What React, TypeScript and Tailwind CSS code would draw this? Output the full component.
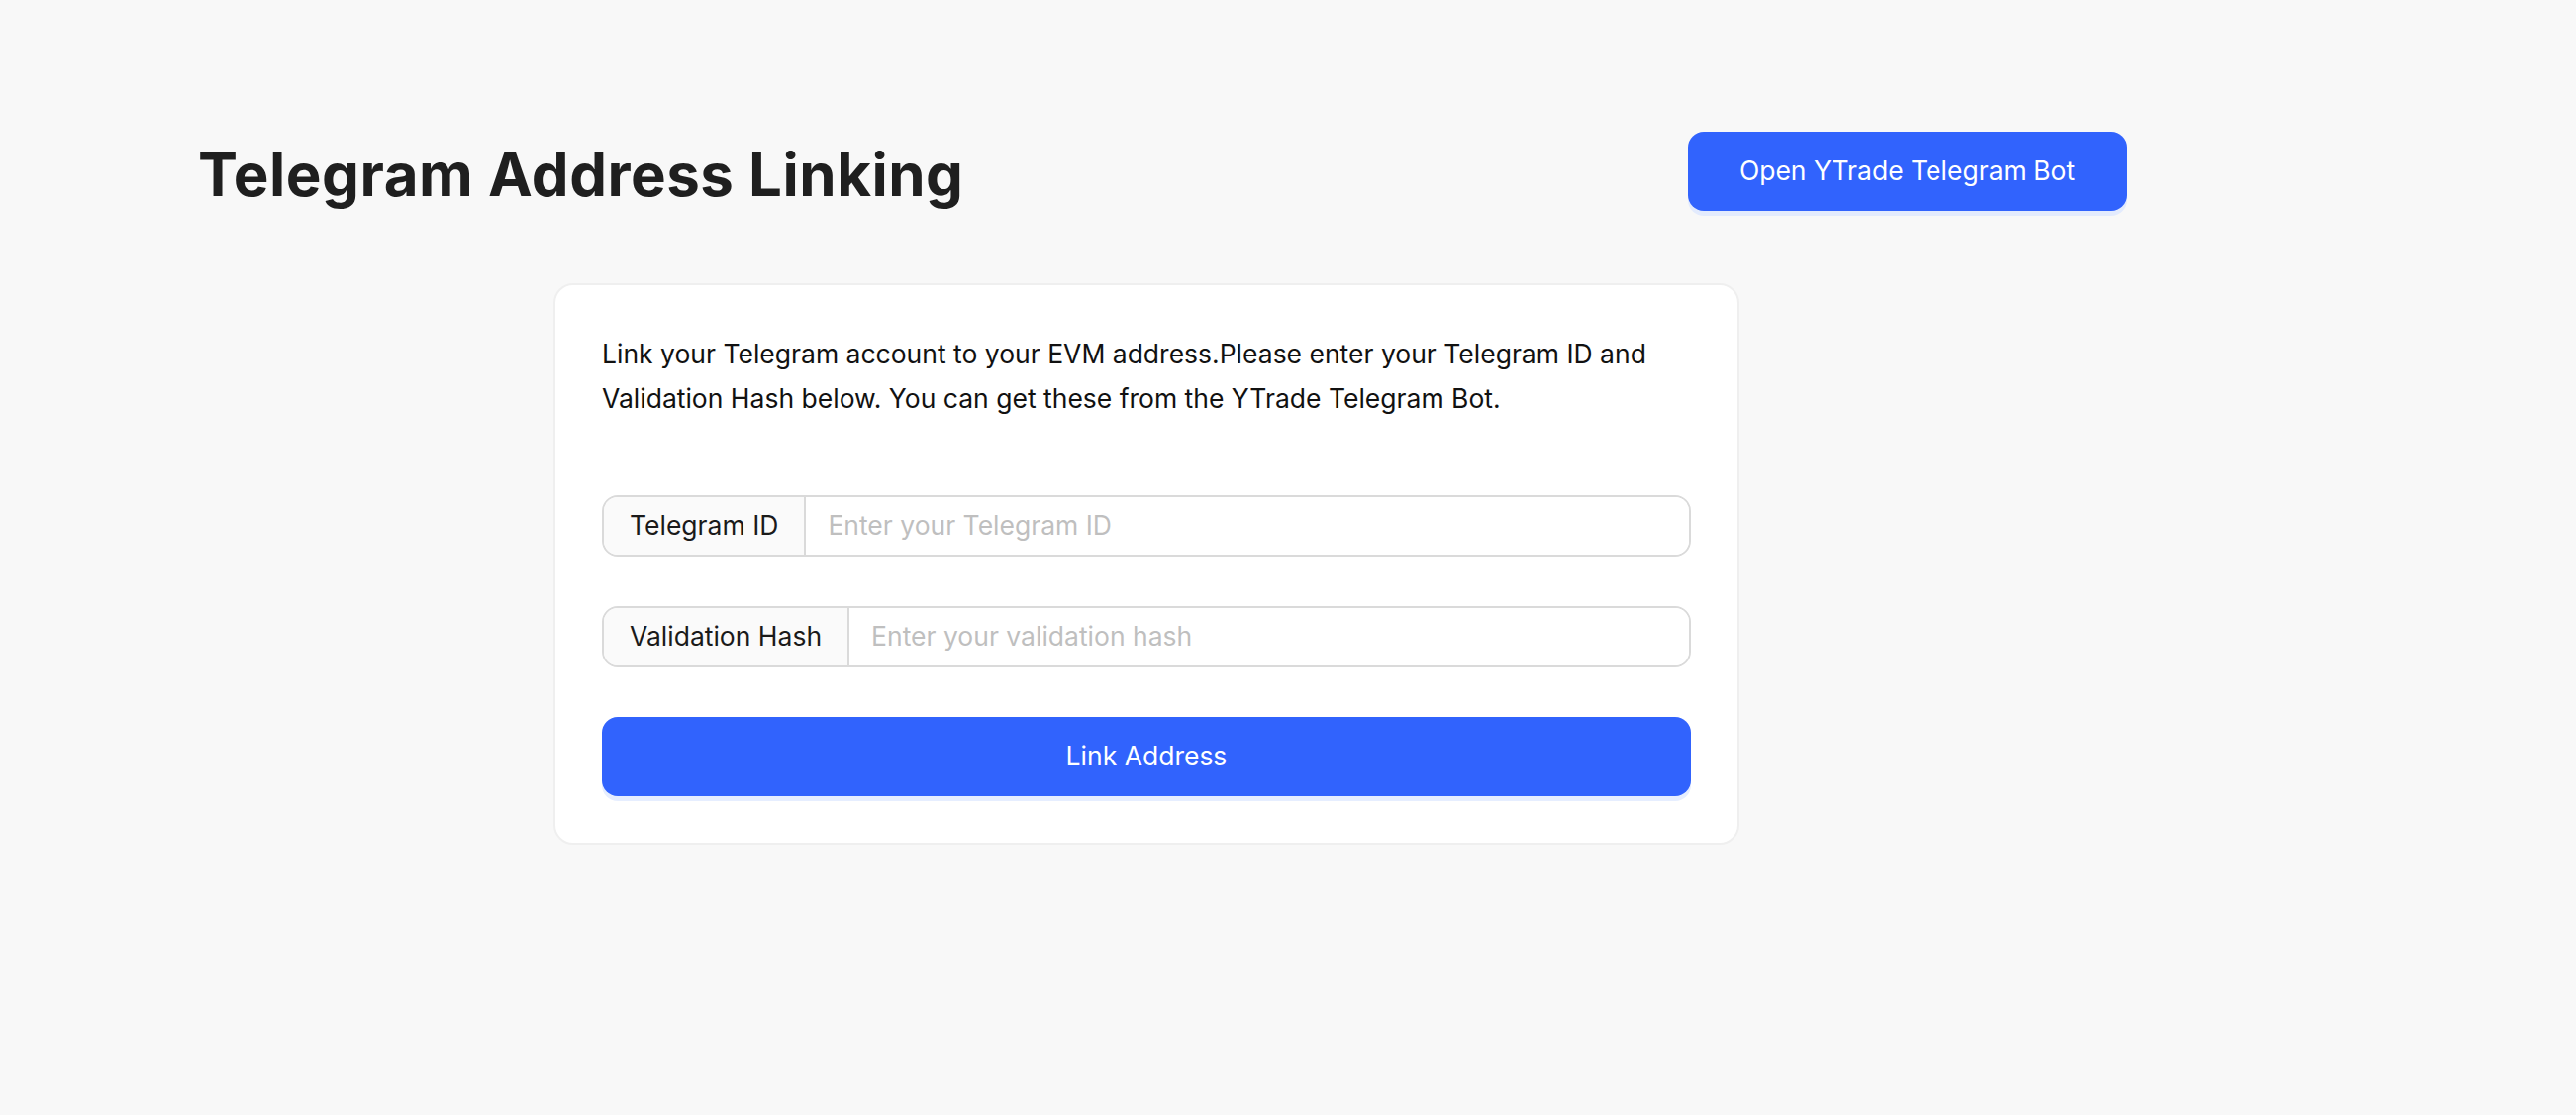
import { useState } from 'react';

export default function App() {
  const [telegramId, setTelegramId] = useState('');
  const [hash, setHash] = useState('');

  return (
    <div className="min-h-screen bg-[#f8f8f8] font-['Inter',sans-serif] text-[#1a1a1a]">
      <div className="flex w-[2148px] items-center justify-between pl-[200px] pt-[130px]">
        <h1 className="pt-[6px] text-[60px] font-bold leading-[80px] tracking-[0.5px] text-[#1f1f1f]">
          Telegram Address Linking
        </h1>
        <button
          type="button"
          className="h-[80px] w-[443px] rounded-[16px] bg-[#3163fd] text-[26.5px] text-white shadow-[0_5px_0_#e3ebfd]"
        >
          Open YTrade Telegram Bot
        </button>
      </div>

      <div className="ml-[559px] mt-[70px] w-[1198px] rounded-[20px] border-2 border-[#efefef] bg-white p-[47px]">
        <p className="text-[26.5px] leading-[45px] text-[#111111]">
          Link your Telegram account to your EVM address.Please enter your Telegram ID and Validation Hash below. You
          can get these from the YTrade Telegram Bot.
        </p>

        <div className="mt-[75px] flex flex-col gap-[50px]">
          <div className="flex h-[62px] overflow-hidden rounded-[16px] border-2 border-[#dadada]">
            <span className="flex items-center border-r-2 border-[#dadada] bg-[#fafafa] px-[26px] text-[26.5px]">
              Telegram ID
            </span>
            <input
              value={telegramId}
              onChange={(e) => setTelegramId(e.target.value)}
              placeholder="Enter your Telegram ID"
              className="flex-1 bg-white px-[22px] text-[26.5px] outline-none placeholder:text-[#bfbfbf]"
            />
          </div>

          <div className="flex h-[62px] overflow-hidden rounded-[16px] border-2 border-[#dadada]">
            <span className="flex items-center border-r-2 border-[#dadada] bg-[#fafafa] px-[26px] text-[26.5px]">
              Validation Hash
            </span>
            <input
              value={hash}
              onChange={(e) => setHash(e.target.value)}
              placeholder="Enter your validation hash"
              className="flex-1 bg-white px-[22px] text-[26.5px] outline-none placeholder:text-[#bfbfbf]"
            />
          </div>

          <button
            type="button"
            className="h-[80px] w-full rounded-[16px] bg-[#3163fd] text-[26.5px] text-white shadow-[0_5px_0_#e6eeff]"
          >
            Link Address
          </button>
        </div>
      </div>
    </div>
  );
}
